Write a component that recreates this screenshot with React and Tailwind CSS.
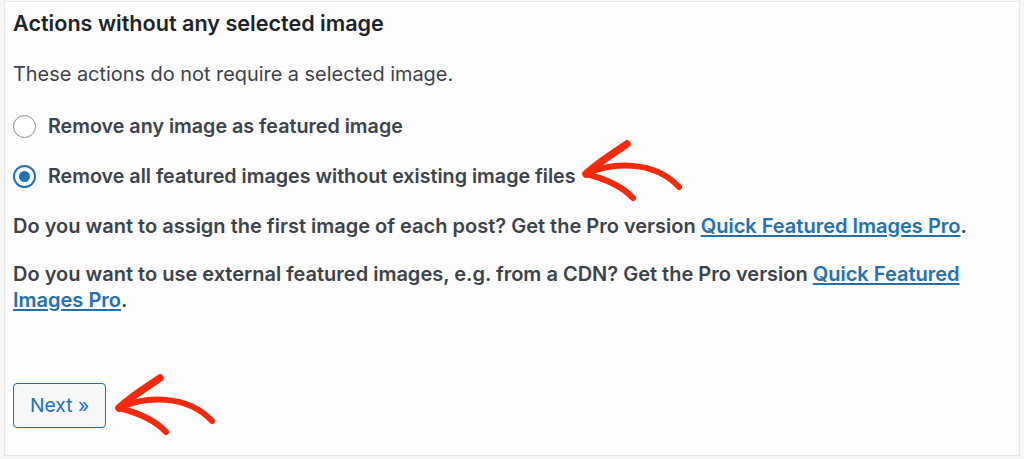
import React from 'react';

function Radio({ checked, label }) {
  return (
    <label className="flex items-center gap-[12px]">
      <span
        className={`flex h-[23px] w-[23px] shrink-0 items-center justify-center rounded-full bg-white ${
          checked ? 'border-2 border-[#2271b1]' : 'border border-[#8c8f94]'
        }`}
      >
        {checked && <span className="h-[11px] w-[11px] rounded-full bg-[#2271b1]" />}
      </span>
      <span className="text-[19.7px] font-semibold leading-[26px] text-[#3c434a]">{label}</span>
    </label>
  );
}

function Arrow({ className }) {
  return (
    <svg className={className} viewBox="0 0 104 62" fill="none">
      <path
        d="M4 34 C 30 22, 72 20, 97 47"
        stroke="#f5290b"
        strokeWidth="6"
        strokeLinecap="round"
      />
      <path d="M45 4 C 30 14, 14 24, 4 34" stroke="#f5290b" strokeWidth="7.5" strokeLinecap="round" />
      <path d="M4 34 C 20 38, 40 46, 51 58" stroke="#f5290b" strokeWidth="6" strokeLinecap="round" />
    </svg>
  );
}

export default function App() {
  return (
    <div className="h-[459px] w-[1024px] bg-[#f6f6f6] pl-[4px] pr-[4px] pt-[1px] pb-[3px] font-['Inter',sans-serif]">
      <div className="relative h-full border border-[#e6e6e6] bg-[#fdfdfd] px-[8px]">
        <h2 className="mt-[7px] text-[21.6px] font-semibold leading-[28px] text-[#1d2327]">
          Actions without any selected image
        </h2>
        <p className="mt-[24px] text-[19.9px] leading-[26px] text-[#3c434a]">
          These actions do not require a selected image.
        </p>
        <div className="mt-[26px] flex flex-col gap-[24px]">
          <Radio label="Remove any image as featured image" />
          <Radio checked label="Remove all featured images without existing image files" />
        </div>
        <p className="mt-[24px] text-[20px] font-semibold leading-[26px] text-[#3c434a]">
          Do you want to assign the first image of each post? Get the Pro version{' '}
          <a className="text-[#2271b1] underline underline-offset-2">Quick Featured Images Pro</a>.
        </p>
        <p className="mt-[22px] text-[20px] font-semibold leading-[26px] text-[#3c434a]">
          Do you want to use external featured images, e.g. from a CDN? Get the Pro version{' '}
          <a className="text-[#2271b1] underline underline-offset-2">Quick Featured Images Pro</a>.
        </p>
        <button className="mt-[70px] h-[45px] rounded-[4px] border border-[#2271b1] bg-[#f6f7f7] px-[16px] text-[19.3px] text-[#2271b1]">
          Next »
        </button>
        <Arrow className="absolute left-[577px] top-[138px] h-[62px] w-[104px]" />
        <Arrow className="absolute left-[110px] top-[372px] h-[62px] w-[104px]" />
      </div>
    </div>
  );
}
